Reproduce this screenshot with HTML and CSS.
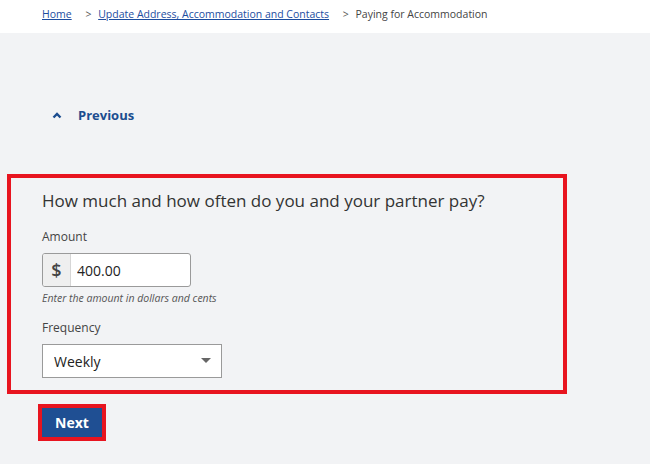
FILE: index.html
```html
<!DOCTYPE html>
<html lang="en">
<head>
  <meta charset="UTF-8">
  <title>Paying for Accommodation</title>
  <link rel="stylesheet" href="styles.css">
</head>
<body>
  <nav class="breadcrumb">
    <a href="#">Home</a>
    <span class="sep">&gt;</span>
    <a href="#">Update Address, Accommodation and Contacts</a>
    <span class="sep">&gt;</span>
    <span class="current">Paying for Accommodation</span>
  </nav>

  <main class="page">
    <a class="previous" href="#">
      <svg width="10" height="7" viewBox="0 0 10 7"><path d="M1.5 5.5 L5 2 L8.5 5.5" fill="none" stroke="#1c4d8f" stroke-width="2.4"/></svg>
      <span>Previous</span>
    </a>

    <form class="question" onsubmit="event.preventDefault();">
      <h2>How much and how often do you and your partner pay?</h2>

      <label class="field-label" for="amount">Amount</label>
      <div class="money-input">
        <span class="addon">$</span>
        <input type="text" id="amount" value="400.00">
      </div>
      <p class="hint">Enter the amount in dollars and cents</p>

      <label class="field-label freq" for="frequency">Frequency</label>
      <div class="select-wrap">
        <select id="frequency">
          <option>Weekly</option>
          <option>Fortnightly</option>
          <option>Monthly</option>
        </select>
        <span class="arrow"></span>
      </div>
    </form>

    <div class="next-outline">
      <button class="next-button" type="button">Next</button>
    </div>
  </main>
</body>
</html>
```

FILE: styles.css
```css
body {
  font-family: "Open Sans", Arial, sans-serif;
  background-color: #f2f3f5;
  margin: 0;
  padding: 0;
  color: #333;
}
.breadcrumb {
  background: white;
  height: 33px;
  padding: 5px 0 0 42px;
  box-sizing: border-box;
  font-size: 10.5px;
  line-height: 18px;
  color: #444;
}
.breadcrumb a {
  color: #1c4d9f;
  text-decoration: underline;
}
.breadcrumb .sep {
  margin: 0 4px 0 11px;
  color: #555;
}
.page {
  padding: 0 0 30px 0;
}
.previous {
  display: flex;
  align-items: center;
  margin: 72px 0 0 52px;
  height: 20px;
  color: #1c4d8f;
  font-weight: bold;
  font-size: 13px;
  text-decoration: none;
  width: 90px;
}
.previous svg {
  margin-right: 16px;
}
.question {
  margin: 49px 0 0 7px;
  width: 560px;
  height: 220px;
  box-sizing: border-box;
  border: 4px solid #e8141f;
  padding: 11px 0 0 31px;
}
.question h2 {
  font-size: 17px;
  font-weight: normal;
  line-height: 24px;
  margin: 0;
  color: #333;
}
.field-label {
  display: block;
  font-size: 12px;
  line-height: 16px;
  margin-top: 16px;
  color: #444;
}
.field-label.freq {
  margin-top: 15px;
}
.money-input {
  display: flex;
  margin-top: 8px;
  width: 149px;
  height: 34px;
  box-sizing: border-box;
  border: 1px solid #9a9a9a;
  border-radius: 3px;
  background: white;
  overflow: hidden;
}
.money-input .addon {
  width: 27px;
  background: #efefef;
  border-right: 1px solid #d6d6d6;
  font-size: 18px;
  font-weight: 600;
  color: #444;
  text-align: center;
  line-height: 32px;
}
.money-input input {
  border: none;
  outline: none;
  font-family: inherit;
  font-size: 14px;
  color: #222;
  padding: 0 0 0 6px;
  width: 100px;
}
.hint {
  font-size: 10.5px;
  font-style: italic;
  line-height: 14px;
  margin: 4px 0 0 0;
  color: #555;
}
.select-wrap {
  position: relative;
  margin-top: 8px;
  width: 180px;
  height: 34px;
}
.select-wrap select {
  width: 100%;
  height: 100%;
  appearance: none;
  border: 1px solid #9a9a9a;
  border-radius: 0;
  background: white;
  font-family: inherit;
  font-size: 14px;
  color: #222;
  padding: 0 0 0 11px;
}
.select-wrap .arrow {
  position: absolute;
  right: 11px;
  top: 14px;
  border-left: 5px solid transparent;
  border-right: 5px solid transparent;
  border-top: 5px solid #666;
}
.next-outline {
  display: inline-block;
  margin: 10px 0 0 38px;
  border: 4px solid #e8141f;
}
.next-button {
  display: block;
  width: 60px;
  height: 29px;
  background-color: #1f4f93;
  color: white;
  border: none;
  font-family: inherit;
  font-weight: bold;
  font-size: 14px;
  cursor: pointer;
  padding: 0;
}
```
